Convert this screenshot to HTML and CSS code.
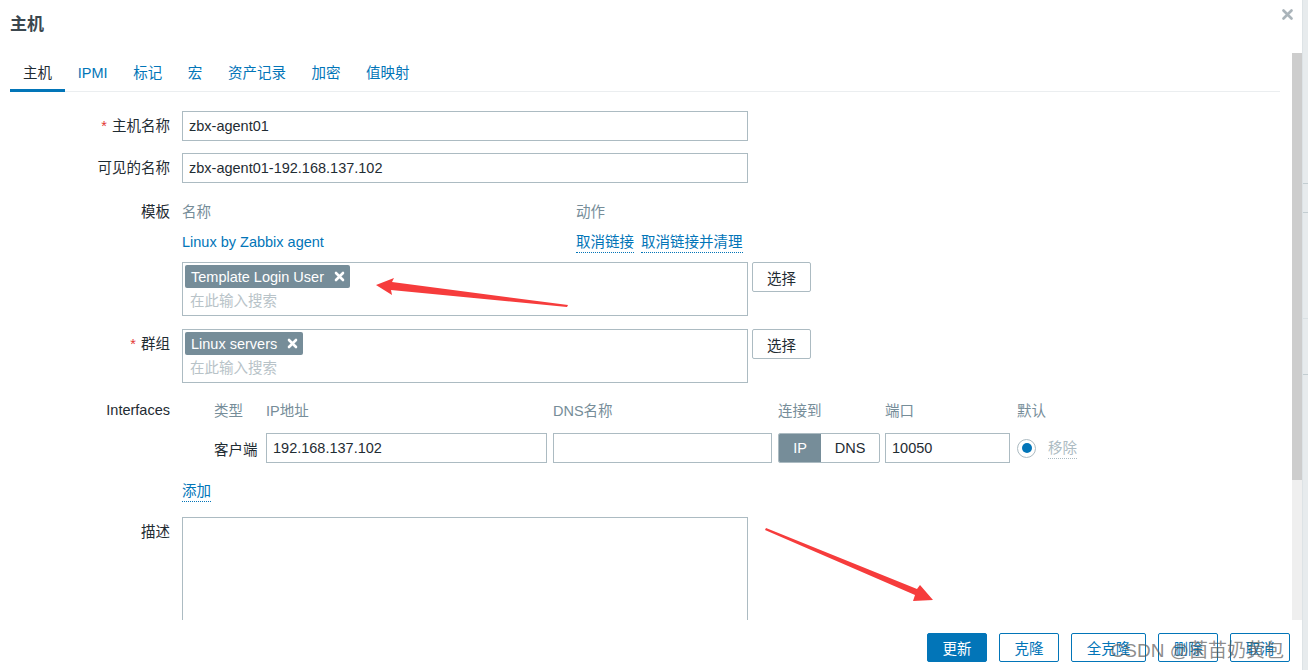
FILE: index.html
```html
<!DOCTYPE html>
<html lang="zh-CN">
<head>
    <meta charset="UTF-8">
    <title>主机</title>
    <link rel="stylesheet" href="styles.css">
</head>
<body>
<div class="page">
    <div class="dialog">
        <div class="dialog-head">
            <h2>主机</h2>
            <span class="close">
                <svg width="11" height="11" viewBox="0 0 11 11"><path d="M1.5 1.5 L9.5 9.5 M9.5 1.5 L1.5 9.5" stroke="#aab4ba" stroke-width="2.6" stroke-linecap="round"/></svg>
            </span>
        </div>
        <div class="dialog-main">
            <div class="scroll">
                <ul class="tabs">
                    <li class="active">主机</li>
                    <li>IPMI</li>
                    <li>标记</li>
                    <li>宏</li>
                    <li>资产记录</li>
                    <li>加密</li>
                    <li>值映射</li>
                </ul>
                <div class="form">
                    <div class="row">
                        <label><span class="req">*</span>主机名称</label>
                        <div class="field"><input class="text wide" type="text" value="zbx-agent01"></div>
                    </div>
                    <div class="row">
                        <label>可见的名称</label>
                        <div class="field"><input class="text wide" type="text" value="zbx-agent01-192.168.137.102"></div>
                    </div>
                    <div class="row row-tight">
                        <label class="tpl-label">模板</label>
                        <div class="field">
                            <div class="tpl-table">
                                <div class="tpl-head">名称</div>
                                <div class="tpl-head">动作</div>
                                <div class="tpl-cell"><a class="link">Linux by Zabbix agent</a></div>
                                <div class="tpl-cell actions"><a class="link dotted">取消链接</a><a class="link dotted">取消链接并清理</a></div>
                            </div>
                            <div class="ms-line">
                                <div class="multiselect">
                                    <span class="tag">Template Login User<i class="x"><svg width="11" height="11" viewBox="0 0 11 11"><path d="M2 2 L9 9 M9 2 L2 9" stroke="#fff" stroke-width="2.6" stroke-linecap="round"/></svg></i></span>
                                    <div class="placeholder">在此输入搜索</div>
                                </div>
                                <button class="btn-alt">选择</button>
                            </div>
                        </div>
                    </div>
                    <div class="row">
                        <label><span class="req">*</span>群组</label>
                        <div class="field">
                            <div class="ms-line">
                                <div class="multiselect">
                                    <span class="tag">Linux servers<i class="x"><svg width="11" height="11" viewBox="0 0 11 11"><path d="M2 2 L9 9 M9 2 L2 9" stroke="#fff" stroke-width="2.6" stroke-linecap="round"/></svg></i></span>
                                    <div class="placeholder">在此输入搜索</div>
                                </div>
                                <button class="btn-alt">选择</button>
                            </div>
                        </div>
                    </div>
                    <div class="row">
                        <label>Interfaces</label>
                        <div class="field">
                            <div class="iface">
                                <div class="ih">类型</div>
                                <div class="ih">IP地址</div>
                                <div class="ih">DNS名称</div>
                                <div class="ih">连接到</div>
                                <div class="ih">端口</div>
                                <div class="ih">默认</div>

                                <div class="itype">客户端</div>
                                <input class="text" type="text" value="192.168.137.102">
                                <input class="text" type="text" value="">
                                <div class="toggle"><span class="on">IP</span><span>DNS</span></div>
                                <input class="text" type="text" value="10050">
                                <div class="idefault"><span class="radio"><span class="dot"></span></span><a class="remove">移除</a></div>
                            </div>
                            <div class="add"><a class="link dotted">添加</a></div>
                        </div>
                    </div>
                    <div class="row">
                        <label>描述</label>
                        <div class="field"><textarea class="area"></textarea></div>
                    </div>
                </div>
            </div>
            <div class="scrollbar"><div class="thumb"></div></div>
        </div>
        <div class="dialog-foot">
            <button class="btn main">更新</button>
            <button class="btn">克隆</button>
            <button class="btn long">全克隆</button>
            <button class="btn">删除</button>
            <button class="btn">取消</button>
            <span class="watermark">CSDN @菌苗奶黄包</span>
        </div>
    </div>
    <div class="behind">
        <div class="b1"></div>
        <div class="b2"></div>
        <div class="b3"></div>
        <div class="b4"></div>
    </div>
</div>
<svg class="marks" width="1308" height="670" viewBox="0 0 1308 670">
    <polygon points="376,285 394,278 392,282 568,305 567,307 391,290 392,295" fill="#f63c3c"/>
    <polygon points="766,528 917,589 920,585 933,600 913,601 915,595 765,530" fill="#f63c3c"/>
</svg>
</body>
</html>
```

FILE: styles.css
```css
body {
    margin: 0;
    font-family: "Liberation Sans", Arial, "Noto Sans CJK SC", sans-serif;
    font-size: 14.5px;
    color: #1f2c33;
    background-color: #ffffff;
}
.page {
    display: flex;
    width: 1308px;
    height: 670px;
    overflow: hidden;
}
.dialog {
    width: 1302px;
    display: flex;
    flex-direction: column;
    background-color: #ffffff;
}
.dialog-head {
    height: 53px;
    display: flex;
    justify-content: space-between;
    align-items: flex-start;
    box-sizing: border-box;
}
.dialog-head h2 {
    margin: 15px 0 0 10px;
    font-size: 17px;
    line-height: 20px;
    font-weight: bold;
    color: #3b474e;
}
.close {
    margin: 7px 9px 0 0;
    display: block;
}
.dialog-main {
    height: 567px;
    display: flex;
}
.scroll {
    flex: 1;
    overflow: hidden;
    padding: 0 12px 0 10px;
}
.scrollbar {
    width: 10px;
    background-color: #efefef;
}
.thumb {
    height: 427px;
    background-color: #cdcdcd;
}
.tabs {
    list-style: none;
    margin: 0;
    padding: 5px 0 0;
    display: flex;
    border-bottom: 1px solid #ebeef0;
}
.tabs li {
    padding: 0 12.8px;
    line-height: 31px;
    color: #0275b8;
    border-bottom: 3px solid transparent;
    margin-bottom: -1px;
}
.tabs li.active {
    color: #1f2c33;
    border-bottom-color: #0275b8;
    padding: 0 13px;
}
.form {
    padding-top: 19px;
}
.row {
    display: grid;
    grid-template-columns: 160px 1fr;
    column-gap: 12px;
    margin-bottom: 12px;
}
.row-tight {
    margin-bottom: 13px;
}
.row label {
    text-align: right;
    line-height: 30px;
}
.row .tpl-label {
    padding-top: 2px;
}
.req {
    color: #e33734;
    margin-right: 5px;
}
.text {
    height: 30px;
    box-sizing: border-box;
    border: 1px solid #acbbc2;
    padding: 0 6px;
    font-family: inherit;
    font-size: 14.5px;
    color: #1f2c33;
    margin: 0;
    outline: none;
}
.wide {
    width: 566px;
}
.tpl-table {
    width: 566px;
    display: grid;
    grid-template-columns: 394px 1fr;
    padding-top: 2px;
}
.tpl-head {
    line-height: 30px;
    color: #768d99;
}
.tpl-cell {
    line-height: 30px;
}
.actions {
    display: flex;
    gap: 7px;
}
.link {
    color: #0275b8;
}
.dotted {
    border-bottom: 1px dotted #0275b8;
    line-height: 20px;
    align-self: center;
}
.ms-line {
    display: flex;
    gap: 4px;
    align-items: flex-start;
}
.tpl-table + .ms-line {
    margin-top: 5px;
}
.multiselect {
    width: 566px;
    height: 54px;
    box-sizing: border-box;
    border: 1px solid #acbbc2;
    padding: 2px 2px 0;
}
.tag {
    display: inline-flex;
    align-items: center;
    height: 23px;
    padding: 0 5px 0 6px;
    background-color: #768d99;
    color: #ffffff;
    border-radius: 2px;
}
.x {
    display: flex;
    margin-left: 10px;
}
.placeholder {
    color: #b8c3c8;
    line-height: 24px;
    padding-left: 5px;
    margin-top: 1px;
}
.btn-alt {
    width: 59px;
    height: 30px;
    background-color: #ffffff;
    border: 1px solid #acbbc2;
    border-radius: 2px;
    font-family: inherit;
    font-size: 14.5px;
    color: #1f2c33;
    padding: 0;
}
.iface {
    margin-left: 32px;
    display: grid;
    grid-template-columns: 46px 281px 219px 102px 125px 90px;
    column-gap: 6px;
    row-gap: 7px;
    align-items: center;
}
.iface .ih {
    line-height: 30px;
    color: #768d99;
    white-space: nowrap;
    padding-top: 1px;
}
.iface > :nth-child(5), .iface > :nth-child(11) {
    margin-left: -1px;
}
.itype {
    white-space: nowrap;
}
.iface .text {
    width: 100%;
}
.toggle {
    display: flex;
    height: 30px;
    box-sizing: border-box;
    border: 1px solid #acbbc2;
    border-radius: 2px;
    overflow: hidden;
}
.toggle span {
    flex: 1;
    text-align: center;
    line-height: 28px;
}
.toggle span.on {
    flex: 0 0 42px;
    background-color: #768d99;
    color: #ffffff;
}
.idefault {
    display: flex;
    align-items: center;
}
.radio {
    width: 19px;
    height: 19px;
    box-sizing: border-box;
    border: 1px solid #acbbc2;
    border-radius: 50%;
    display: flex;
    align-items: center;
    justify-content: center;
}
.dot {
    width: 10px;
    height: 10px;
    border-radius: 50%;
    background-color: #0275b8;
}
.remove {
    margin-left: 12px;
    color: #acbbc2;
    border-bottom: 1px dotted #acbbc2;
    line-height: 20px;
}
.add {
    margin-top: 14px;
    height: 28px;
    display: flex;
    align-items: center;
}
.area {
    display: block;
    width: 566px;
    height: 140px;
    box-sizing: border-box;
    border: 1px solid #acbbc2;
    margin: 0;
    resize: none;
}
.dialog-foot {
    height: 50px;
    position: relative;
    display: flex;
    justify-content: flex-end;
    align-items: flex-start;
    gap: 12px;
    padding: 13px 12px 0 0;
    box-sizing: border-box;
}
.btn {
    height: 29px;
    width: 60px;
    padding: 0;
    background-color: #ffffff;
    border: 1px solid #0275b8;
    border-radius: 2px;
    color: #0275b8;
    font-family: inherit;
    font-size: 14.5px;
}
.btn.long {
    width: 75px;
}
.btn.main {
    background-color: #0275b8;
    color: #ffffff;
}
.watermark {
    position: absolute;
    right: 18px;
    top: 15px;
    font-size: 19px;
    color: rgba(90, 90, 90, 0.7);
    white-space: nowrap;
    pointer-events: none;
}
.behind {
    flex: 1;
    background-color: #e7ebed;
    border-left: 1px solid #dde3e6;
}
.behind div {
    border-bottom: 1px solid #c3cdd1;
}
.b1 { height: 183px; }
.b2 { height: 28px; }
.b3 { height: 105px; border-bottom-color: #d9e0e3 !important; }
.b4 { height: 55px; }
.marks {
    position: absolute;
    left: 0;
    top: 0;
    pointer-events: none;
}
```
